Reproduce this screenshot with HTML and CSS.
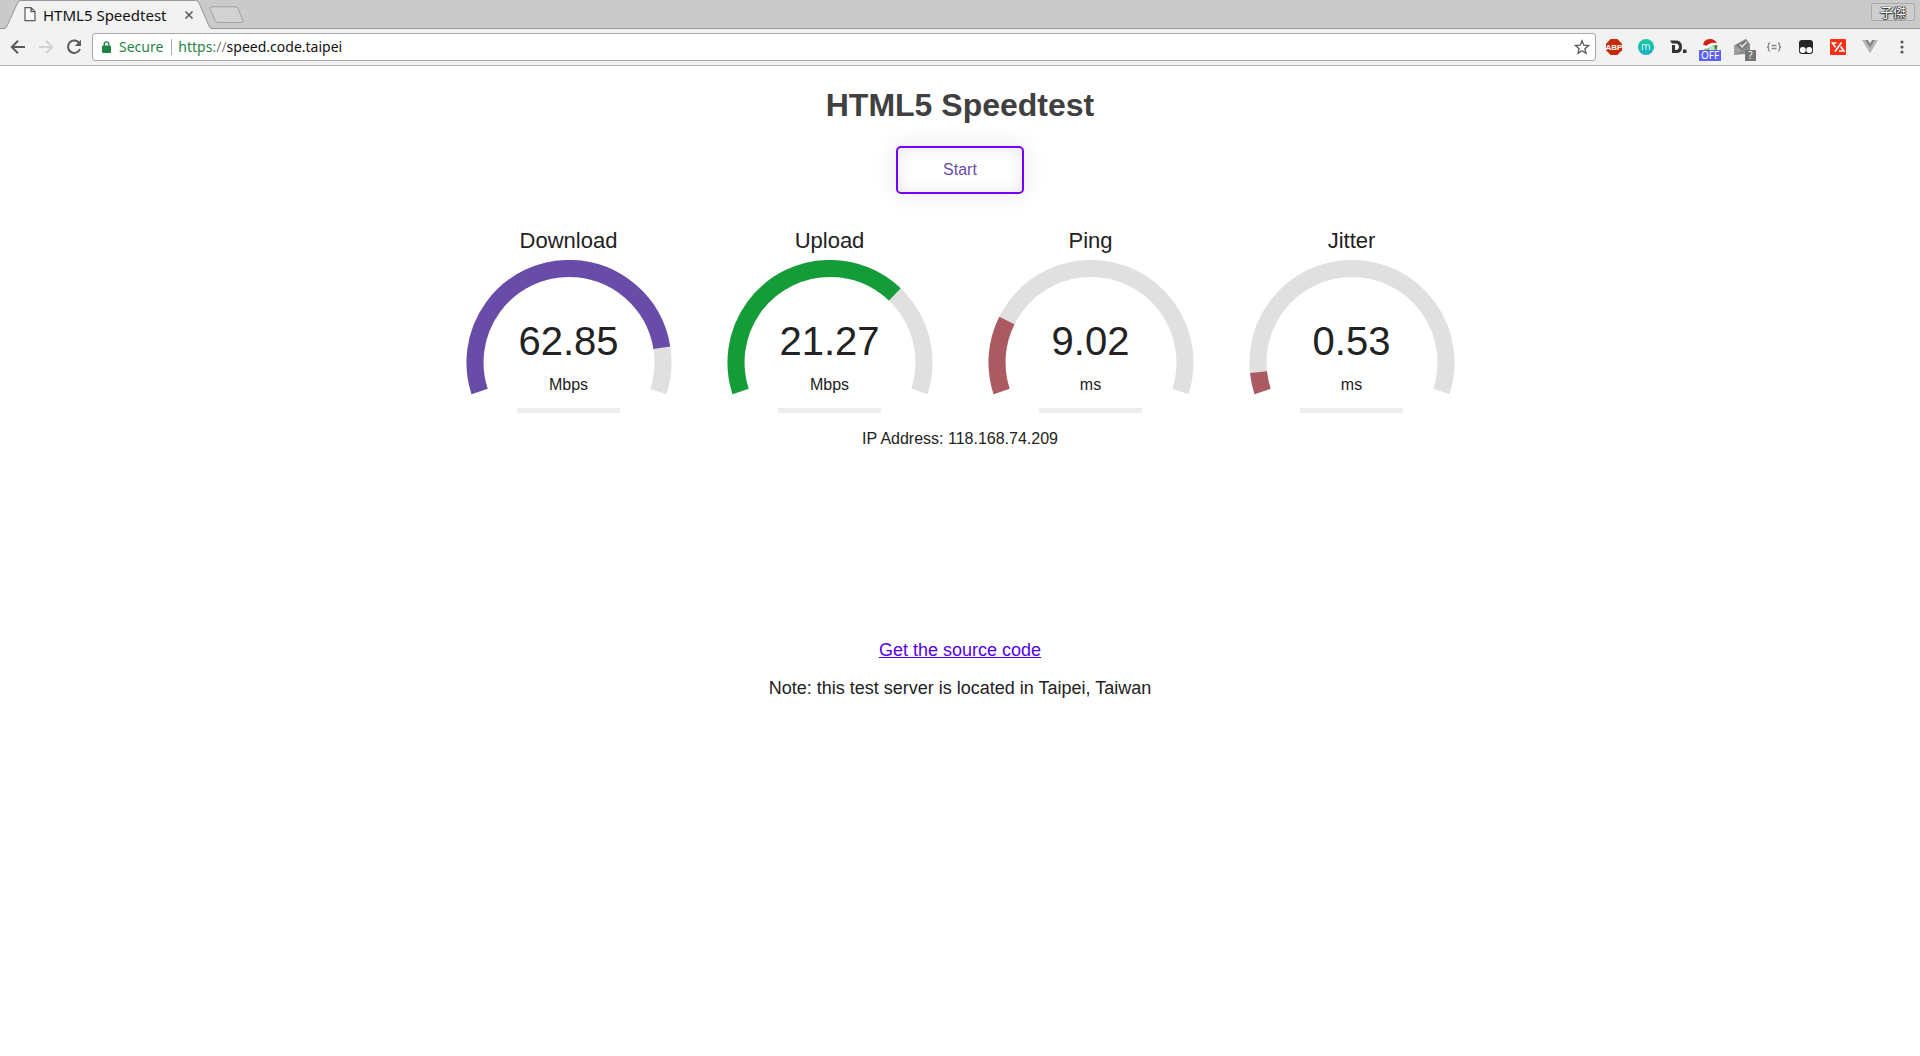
FILE: index.html
```html
<!DOCTYPE html>
<html lang="en">
<head>
<meta charset="utf-8">
<title>HTML5 Speedtest</title>
<link rel="stylesheet" href="styles.css">
</head>
<body>
<header class="browser">
  <div class="tabstrip">
    <div class="tab">
      <svg class="tab-shape" viewBox="0 0 212 29" aria-hidden="true"><path d="M0 28.500H4Q6 28.500 7 26L17.500 3Q18.500 .5 21 .5H195.500Q198 .5 199 3L209 26Q210 28.500 212 28.500V29H0z" fill="#f2f2f2"/><path d="M0 28.500H4Q6 28.500 7 26L17.500 3Q18.500 .5 21 .5H195.500Q198 .5 199 3L209 26Q210 28.500 212 28.500" fill="none" stroke="#969696"/></svg>
      <svg class="tab-file" viewBox="0 0 12 15" aria-hidden="true"><path d="M1 .7h6l4 4v9H1zM7 .7v4h4" fill="#fafafa" stroke="#5a5a5a" stroke-width="1.200"/></svg>
      <span class="tab-title">HTML5 Speedtest</span>
      <button class="tab-close" type="button" aria-label="Close tab"><svg width="10" height="10" viewBox="0 0 10 10"><path d="M1.500 1.500l7 7m0-7l-7 7" stroke="#5a5a5a" stroke-width="1.600"/></svg></button>
    </div>
    <button class="new-tab" type="button" aria-label="New tab"><svg width="36" height="18" viewBox="0 0 36 18"><path d="M3 .8H26Q28 .8 29 2.500L34 14.500Q34.500 16.500 33 16.500H9Q7 16.500 6 14.500L1 2.500Q.5 .8 3 .8z" fill="#d2d2d2" stroke="#a0a0a0"/></svg></button>
    <button class="profile" type="button">子傑</button>
  </div>
  <div class="toolbar">
    <nav class="nav-buttons" aria-label="History">
      <button type="button" aria-label="Back"><svg width="16" height="16" viewBox="0 0 16 16"><path d="M15 8H2M8 1.700L1.800 8L8 14.300" fill="none" stroke="#5a5a5a" stroke-width="2"/></svg></button>
      <button type="button" aria-label="Forward"><svg width="16" height="16" viewBox="0 0 16 16"><path d="M1 8h13M8 1.700L14.200 8L8 14.300" fill="none" stroke="#d2d2d2" stroke-width="2"/></svg></button>
      <button type="button" aria-label="Reload"><svg width="16" height="16" viewBox="0 0 16 16"><path d="M13.500 4.500A6.200 6.200 0 1 0 14 10" fill="none" stroke="#5a5a5a" stroke-width="2"/><path d="M15 .8V7H8.800z" fill="#5a5a5a"/></svg></button>
    </nav>
    <div class="omnibox">
      <svg class="lock" width="9" height="12" viewBox="0 0 9 12" aria-hidden="true"><path d="M2.200 5V3.200a2.300 2.300 0 0 1 4.600 0V5" fill="none" stroke="#1f8545" stroke-width="1.300"/><rect x="0" y="4.500" width="9" height="7.500" rx="1" fill="#1f8545"/></svg>
      <span class="secure">Secure</span>
      <label class="scheme" for="url"><span class="https">https</span>://</label>
      <input id="url" class="url" type="text" value="speed.code.taipei">
      <button class="star" type="button" aria-label="Bookmark this page"><svg width="16" height="16" viewBox="0 0 16 16"><path d="M8 1.800l1.800 4.400 4.700.4-3.600 3.100 1.100 4.600L8 11.800l-4 2.500 1.100-4.600L1.500 6.600l4.700-.4z" fill="none" stroke="#5a5a5a" stroke-width="1.300"/></svg></button>
    </div>
    <div class="extensions">
      <button type="button" aria-label="Adblock Plus"><svg width="18" height="18" viewBox="0 0 18 18"><path d="M5.700 1h6.600L17 5.700v6.600L12.300 17H5.700L1 12.300V5.700z" fill="#c72a08"/><text class="abp" x="9" y="12" text-anchor="middle">ABP</text></svg></button>
      <button type="button" aria-label="m"><svg width="18" height="18" viewBox="0 0 18 18"><defs><linearGradient id="teal" x1="0" y1="0" x2="0" y2="1"><stop offset="0" stop-color="#1fc8a0"/><stop offset="1" stop-color="#18b2c4"/></linearGradient></defs><circle cx="9" cy="9" r="8" fill="url(#teal)"/><path d="M5.500 12V6M5.500 8.200Q5.800 6.500 7.300 6.500T9 8.200V12M9 8.200Q9.300 6.500 10.800 6.500T12.500 8.200V12" fill="none" stroke="#c4f5ea" stroke-width="1.100"/></svg></button>
      <button type="button" aria-label="D."><svg width="18" height="18" viewBox="0 0 18 18"><path d="M1 2.500h6.500Q13 3 13 9t-5.500 6H3V7h3v5h1q3-.2 3-3.200T7 5.500H3z" fill="#333"/><path d="M14 11.500h3.500V15H14z" fill="#333"/></svg></button>
      <button type="button" aria-label="Holiday, off"><svg width="18" height="18" viewBox="0 0 18 18"><path d="M3.500 13V7H16v6z" fill="#78b84c"/><path d="M8 9.500l3-2 3 2.500-2 3H8z" fill="#b9ddeb"/><path d="M14 6l2.500 2-1 4-1.500-2z" fill="#4a7a34"/><path d="M2 8.500Q2 1 9 1q5 0 7 4.500L9 6l-5 4z" fill="#d81e10"/><path d="M4 9.500Q8 4 15.500 5l.5 2Q9.500 7 6 11z" fill="#fff"/><circle cx="3.300" cy="9" r="2" fill="#f8f8f8"/></svg><span class="badge badge-off">OFF</span></button>
      <button type="button" aria-label="Mail checker"><svg width="18" height="18" viewBox="0 0 18 18"><path d="M1 7.500L13 .8l4 5.200v9.500L1 17z" fill="#8e8e8e"/><path d="M1 7.500l8 4.500-8 5z" fill="#a2a2a2"/><path d="M3 7L12.500 2l3 5L9 12z" fill="#7c7c7c"/><path d="M7 6.500l2.200 2.300L13.500 4" fill="none" stroke="#e2e2e2" stroke-width="1.500"/></svg><span class="badge badge-query">?</span></button>
      <button type="button" aria-label="JSON viewer"><svg width="18" height="18" viewBox="0 0 18 18"><path d="M5 5Q3.500 5 3.500 6.500v1.300Q3.500 9 2 9q1.500 0 1.500 1.200v1.300Q3.500 13 5 13M13 5q1.500 0 1.500 1.500v1.300Q14.500 9 16 9q-1.500 0-1.500 1.200v1.300Q14.500 13 13 13M6.500 7.500h5M6.500 10.500h5" fill="none" stroke="#8a8a8a" stroke-width="1.300"/></svg></button>
      <button type="button" aria-label="Tampermonkey"><svg width="18" height="18" viewBox="0 0 18 18"><rect x="2" y="2" width="14" height="14" rx="3" fill="#262626"/><circle cx="5.800" cy="12" r="3" fill="#fff"/><circle cx="12.200" cy="12" r="3" fill="#fff"/></svg></button>
      <button type="button" aria-label="Red tools"><svg width="18" height="18" viewBox="0 0 18 18"><rect x="1" y="1" width="16" height="16" rx="1" fill="#fb2e14"/><path d="M7.500 5H3.500l3 4.200M12.500 4.500L6 13.500M11.800 8.500L14.800 13H10" fill="none" stroke="#fff" stroke-width="1.700"/></svg></button>
      <button type="button" aria-label="Vue devtools"><svg width="18" height="18" viewBox="0 0 18 18"><path d="M1 2h16L9 15.500z" fill="#b8b8b8"/><path d="M4.300 2h9.400L9 10z" fill="#858585"/><path d="M7 2h4L9 5.400z" fill="#f2f2f2"/></svg></button>
      <button type="button" aria-label="Menu"><svg width="18" height="18" viewBox="0 0 18 18"><g fill="#5a5a5a"><circle cx="9" cy="4" r="1.600"/><circle cx="9" cy="9" r="1.600"/><circle cx="9" cy="14" r="1.600"/></g></svg></button>
    </div>
  </div>
</header>

<main class="page">
  <h1 class="title">HTML5 Speedtest</h1>
  <button class="start" type="button">Start</button>
  <div class="results">
    <section class="test">
      <h2 class="test-name">Download</h2>
      <div class="gauge">
        <svg class="arc" viewBox="0 0 206 136" aria-hidden="true"><path class="track" d="M13.600 131.500A94 94 0 1 1 192.400 131.500"/><path class="value download" pathLength="1000" stroke-dasharray="875 2000" d="M13.600 131.500A94 94 0 1 1 192.400 131.500"/></svg>
        <div class="reading"><span class="number">62.85</span><span class="unit">Mbps</span></div>
      </div>
      <div class="progress"></div>
    </section>
    <section class="test">
      <h2 class="test-name">Upload</h2>
      <div class="gauge">
        <svg class="arc" viewBox="0 0 206 136" aria-hidden="true"><path class="track" d="M13.600 131.500A94 94 0 1 1 192.400 131.500"/><path class="value upload" pathLength="1000" stroke-dasharray="702 2000" d="M13.600 131.500A94 94 0 1 1 192.400 131.500"/></svg>
        <div class="reading"><span class="number">21.27</span><span class="unit">Mbps</span></div>
      </div>
      <div class="progress"></div>
    </section>
    <section class="test">
      <h2 class="test-name">Ping</h2>
      <div class="gauge">
        <svg class="arc" viewBox="0 0 206 136" aria-hidden="true"><path class="track" d="M13.600 131.500A94 94 0 1 1 192.400 131.500"/><path class="value latency" pathLength="1000" stroke-dasharray="206 2000" d="M13.600 131.500A94 94 0 1 1 192.400 131.500"/></svg>
        <div class="reading"><span class="number">9.02</span><span class="unit">ms</span></div>
      </div>
      <div class="progress"></div>
    </section>
    <section class="test">
      <h2 class="test-name">Jitter</h2>
      <div class="gauge">
        <svg class="arc" viewBox="0 0 206 136" aria-hidden="true"><path class="track" d="M13.600 131.500A94 94 0 1 1 192.400 131.500"/><path class="value latency" pathLength="1000" stroke-dasharray="56 2000" d="M13.600 131.500A94 94 0 1 1 192.400 131.500"/></svg>
        <div class="reading"><span class="number">0.53</span><span class="unit">ms</span></div>
      </div>
      <div class="progress"></div>
    </section>
  </div>
  <p class="ip">IP Address: 118.168.74.209</p>
  <footer class="about">
    <a href="#source">Get the source code</a>
    <p>Note: this test server is located in Taipei, Taiwan</p>
  </footer>
</main>
</body>
</html>
```
FILE: styles.css
```css
* { box-sizing: border-box; }

body {
  margin: 0;
  background: #fff;
  color: #222;
  font: 16px/20px "Liberation Sans", Arial, sans-serif;
}

button {
  padding: 0;
  border: 0;
  background: none;
  font: inherit;
  color: inherit;
}

svg { display: block; }

/* Browser frame */
.browser {
  font: 14px/20px "Noto Sans", "Noto Sans CJK TC", sans-serif;
  color: #111;
}

.tabstrip {
  display: flex;
  align-items: center;
  height: 29px;
  background: #cacaca;
  box-shadow: inset 0 -1px #969696;
}

.tab {
  position: relative;
  display: flex;
  align-items: center;
  width: 212px;
  height: 29px;
  padding: 0 18px 0 24px;
}

.tab-shape {
  position: absolute;
  inset: 0;
  width: 212px;
  height: 29px;
}

.tab-file {
  position: relative;
  width: 12px;
  height: 15px;
}

.tab-title {
  position: relative;
  flex: 1;
  margin-left: 7px;
  font-size: 15px;
  white-space: nowrap;
}

.tab-close { position: relative; }

.new-tab { margin-left: -3px; }

.profile {
  width: 44px;
  height: 18px;
  margin: 0 5px 6px auto;
  border: 1px solid #aaa;
  border-radius: 2px;
  background: #cecece;
  color: #fff;
  font-size: 13px;
  line-height: 16px;
  text-shadow: 0 0 1px #000, 1px 0 1px #333, -1px 0 1px #333, 0 1px 1px #333;
}

.toolbar {
  display: flex;
  align-items: center;
  height: 37px;
  padding: 0 2px 0 4px;
  border-bottom: 1px solid #b4b4b4;
  background: #f2f2f2;
}

.nav-buttons {
  display: flex;
  margin-right: 4px;
}

.nav-buttons button,
.extensions button {
  position: relative;
  display: grid;
  place-items: center;
  width: 28px;
  height: 28px;
}

.omnibox {
  display: flex;
  flex: 1;
  align-items: center;
  height: 28px;
  margin-right: 2px;
  padding: 0 5px 0 9px;
  border: 1px solid #a8a8a8;
  border-radius: 3px;
  background: #fff;
}

.secure {
  margin: 0 8px;
  color: #1f8545;
}

.scheme {
  padding-left: 6px;
  border-left: 1px solid #aaa;
  color: #808080;
  line-height: 16px;
}

.https { color: #1f8545; }

.url {
  flex: 1;
  min-width: 0;
  padding: 0;
  border: 0;
  outline: 0;
  background: none;
  color: #111;
  font: inherit;
}

.extensions { display: flex; }

.extensions button { width: 32px; }

.abp {
  fill: #fff;
  font: bold 8px "Liberation Sans", sans-serif;
}

.badge {
  position: absolute;
  color: #fff;
  font-size: 10px;
  line-height: 11px;
  text-align: center;
}

.badge-off {
  left: 5px;
  bottom: 0;
  width: 22px;
  background: #5d62f4;
}

.badge-query {
  right: 2px;
  bottom: 0;
  width: 11px;
  background: #757575;
}

/* Speed test */
.page {
  display: flex;
  flex-direction: column;
  align-items: center;
  padding: 20px 16px;
}

.title {
  margin: 0;
  color: #404040;
  font-size: 32px;
  line-height: 38px;
}

.start {
  width: 128px;
  height: 48px;
  margin: 22px 0 34px;
  border: 2px solid #7300ff;
  border-radius: 5px;
  box-shadow: 0 0 24px rgba(0, 0, 0, .1), inset 0 0 16px rgba(0, 0, 0, .1);
  color: #684ca8;
}

.results {
  display: flex;
  flex-wrap: wrap;
  justify-content: center;
  gap: 5px;
}

.test {
  display: flex;
  flex-direction: column;
  align-items: center;
  width: 256px;
}

.test-name {
  margin: 0 0 6px;
  font-size: 22px;
  font-weight: normal;
  line-height: 26px;
}

.gauge {
  display: grid;
  justify-items: center;
}

.arc,
.reading { grid-area: 1 / 1; }

.arc {
  width: 206px;
  height: 136px;
}

.track,
.value {
  fill: none;
  stroke: #e0e0e0;
  stroke-width: 17px;
}

.download { stroke: #684ca8; }
.upload { stroke: #149c38; }
.latency { stroke: #aa5a60; }

.reading {
  display: flex;
  flex-direction: column;
  align-items: center;
  padding-top: 58px;
}

.number {
  font-size: 40px;
  line-height: 46px;
}

.unit { margin-top: 11px; }

.progress {
  width: 40%;
  height: 5px;
  margin-top: 12px;
  background: #eee;
}

.ip { margin: 16px 0 0; }

.about {
  display: flex;
  flex-direction: column;
  align-items: center;
  gap: 18px;
  margin-top: 191px;
  font-size: 18px;
  text-align: center;
}

.about p { margin: 0; }

.about a { color: #5500e8; }
```
